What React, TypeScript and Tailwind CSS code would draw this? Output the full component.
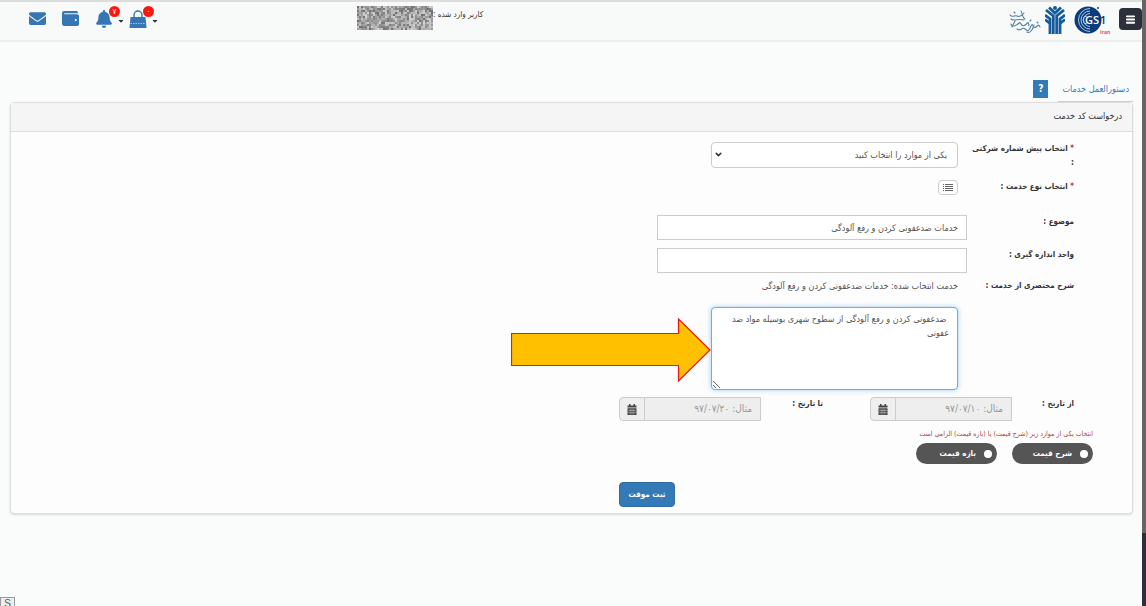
import type { ReactNode } from "react";
import { FaBell, FaCaretDown, FaEnvelope, FaWallet } from "react-icons/fa";
import { ChevronDown, Menu } from "lucide-react";

const Gs1Logo = () => (
    <svg viewBox="0 0 38 30" className="h-[30px] w-[38px]" direction="ltr" role="img" aria-label="GS1 Iran">
        <circle cx="15" cy="14" r="13.500" fill="#0b3c7c" />
        <g fill="none" stroke="#b9d3ee" strokeWidth="0.9">
            <path d="M17 2.500 A11.500 11.500 0 0 0 17 25.500" />
            <path d="M17 5 A9 9 0 0 0 17 23" />
            <path d="M17 7.500 A6.500 6.500 0 0 0 17 20.500" />
            <path d="M14 10 A4 4 0 0 0 14 18" />
        </g>
        <text x="12" y="18" fontSize="11" fontFamily="Open Sans, sans-serif" fontWeight="600" fill="#fff">GS</text>
        <text x="27" y="18" fontSize="11" fontFamily="Open Sans, sans-serif" fontWeight="600" fill="#24364f">1</text>
        <circle cx="25" cy="2" r="1" fill="#24364f" />
        <text x="27" y="28" fontSize="5" fontFamily="Open Sans, sans-serif" fontWeight="700" fill="#e0555d">Iran</text>
    </svg>
);

const TreeLogo = () => (
    <svg viewBox="0 0 20 28" className="h-7 w-5" aria-hidden="true">
        <g fill="none" stroke="#155a9c" strokeWidth="2.800">
            <path d="M1 4 L8.300 10 V28" />
            <path d="M19 4 L11.700 10 V28" />
            <path d="M0 9 L5 13 V28" />
            <path d="M20 9 L15 13 V28" />
            <path d="M4 1.500 L10 7 L16 1.500" />
            <path d="M0 13.500 L5 17.500 M20 13.500 L15 17.500" />
        </g>
        <circle cx="10" cy="2" r="2" fill="#155a9c" />
    </svg>
);

const CalligraphyLogo = () => (
    <svg viewBox="0 0 32 24" className="h-6 w-8" aria-hidden="true">
        <g fill="none" stroke="#5580a3" strokeWidth="1.100" strokeLinecap="round">
            <path d="M1 5 C3 8 6 5 8 6 S12 7 15 3" />
            <path d="M2 9 C6 12 9 8 15 10 M12 1 C14 4 13 8 16 9" />
            <path d="M2 14 C3 18 8 15 10 13 S12 18 16 15 S19 11 20 16" />
            <path d="M8 19 C12 22 13 16 16 19 S20 21 22 16 S24 20 27 17 S30 15 31 17" />
            <path d="M18 22 C21 24 24 19 25 15 M6 11 L3 17" />
            <path d="M28 12 L29 13 M21 11 L22 10 M5 2 L6 3" />
        </g>
    </svg>
);

const BagIcon = () => (
    <svg viewBox="0 0 18 19" className="h-[19px] w-[18px]" aria-hidden="true">
        <path d="M5 9 V5 a4 4 0 0 1 8 0 V9" fill="none" stroke="#3776b5" strokeWidth="1.400" />
        <path d="M1.500 7 H16.500 L17.500 18 H0.500 Z" fill="#3776b5" />
        <path d="M1.500 13.500 H16.500" stroke="#a9c5e0" strokeDasharray="1.500 1" />
    </svg>
);

const ListIcon = () => (
    <svg viewBox="0 0 10 8" className="h-2 w-2.5" aria-hidden="true">
        <path d="M0 0.500 H1 M2 0.500 H10 M0 2.500 H1 M2 2.500 H10 M0 4.500 H1 M2 4.500 H10 M0 6.500 H1 M2 6.500 H10" stroke="#666" />
    </svg>
);

const CalendarIcon = () => (
    <svg viewBox="0 0 10 11" className="h-[11px] w-2.5" aria-hidden="true">
        <path d="M0.500 1.500 H2 V0 H3.500 V1.500 H6.500 V0 H8 V1.500 H9.500 V3.500 H0.500 Z M0.500 4.300 H9.500 V11 H0.500 Z" fill="#444" />
        <path d="M1 6.500 H9 M1 8.700 H9 M3.200 5 V10.500 M5 5 V10.500 M6.800 5 V10.500" stroke="#ccc" strokeWidth="0.5" />
    </svg>
);

// blurred-out user name
const NOISE = Array.from({ length: 38 * 12 }, (_, i) => {
    const n = Math.sin(i * 12.9898) * 43758.5453;
    return 110 + Math.floor((n - Math.floor(n)) * 100);
});

const MaskedName = () => (
    <svg viewBox="0 0 76 24" className="h-6 w-[76px]" aria-hidden="true">
        {NOISE.map((v, i) => (
            <rect key={i} x={(i % 38) * 2} y={Math.floor(i / 38) * 2} width="2" height="2" fill={`rgb(${v},${v},${v})`} />
        ))}
    </svg>
);

const Badge = ({ children }: { children: ReactNode }) => (
    <span className="absolute -top-1 left-3.5 flex h-[11px] w-[11px] items-center justify-center rounded-full bg-[#f5190f] text-[8px] text-white">
        {children}
    </span>
);

const Row = ({ label, id, required, className = "", children }: {
    label: string;
    id: string;
    required?: boolean;
    className?: string;
    children: ReactNode;
}) => (
    <div className={`flex items-start ${className}`}>
        <label htmlFor={id} className="w-[107px] shrink-0 pl-1 text-[8px] font-bold">
            {required && <span className="text-[#a94442]">* </span>}
            {label}
        </label>
        {children}
    </div>
);

const DateField = ({ id, label, placeholder }: { id: string; label: string; placeholder: string }) => (
    <div className="flex items-start">
        <label htmlFor={id} className="w-[62px] text-[8px] font-bold">{label}</label>
        <div className="flex h-6 w-[142px] overflow-hidden rounded-l border border-[#ccc] bg-[#eee]">
            <input id={id} disabled placeholder={placeholder} className="min-w-0 flex-1 px-2 text-[10px] placeholder:text-[#999]" />
            <button type="button" aria-label={label} className="flex w-[25px] items-center justify-center border-r border-[#ccc]">
                <CalendarIcon />
            </button>
        </div>
    </div>
);

const PriceOption = ({ label }: { label: string }) => (
    <label className="flex h-[21px] w-[81px] items-center gap-2 rounded-full bg-[#555] px-[5px] text-[8px] font-bold text-white">
        <input type="radio" name="price" className="h-2 w-2 appearance-none rounded-full bg-white" />
        {label}
    </label>
);

export default function App() {
    return (
        <div dir="rtl" className="flex min-h-screen bg-[#fafcfb] font-['DejaVu_Sans_Condensed','DejaVu_Sans',sans-serif] text-[9px] leading-[14px] text-[#333]">
            <div className="w-1 shrink-0 bg-[#2b303b]">
                <div className="h-[88vh] bg-[#666]" />
            </div>

            <div className="min-w-0 flex-1">
                <header className="flex h-[42px] items-start border-y-2 border-b-[#eceeee] border-t-[#ddd] bg-[#f8f9f9] pt-1">
                    <button type="button" aria-label="منو" className="mt-0.5 flex h-[22px] w-[23px] items-center justify-center rounded bg-[#2b303b] text-white">
                        <Menu size={11} strokeWidth={4} />
                    </button>
                    <div className="mr-2 flex items-start gap-2">
                        <Gs1Logo />
                        <TreeLogo />
                        <div className="-mr-1 pt-1"><CalligraphyLogo /></div>
                    </div>
                    <div className="flex flex-1 justify-end pl-[200px]">
                        <span className="pt-0.5 text-[8px]">کاربر وارد شده :</span>
                        <MaskedName />
                    </div>
                    <nav className="flex w-[157px] items-start justify-end gap-4 pl-[29px] pt-1 text-[#3776b5]">
                        <a href="#cart" aria-label="سبد خرید" className="relative w-[18px]">
                            <BagIcon />
                            <Badge>۰</Badge>
                            <FaCaretDown size={8} className="absolute left-[22px] top-[7px] text-[#333]" />
                        </a>
                        <a href="#alerts" aria-label="اعلان‌ها" className="relative w-[18px]">
                            <FaBell size={18} />
                            <Badge>۷</Badge>
                            <FaCaretDown size={8} className="absolute left-[22px] top-[7px] text-[#333]" />
                        </a>
                        <a href="#wallet" aria-label="کیف پول"><FaWallet size={17} /></a>
                        <a href="#inbox" aria-label="پیام‌ها"><FaEnvelope size={17} /></a>
                    </nav>
                </header>

                <main className="px-[9px] pl-2.5 pt-9">
                    <div className="flex h-6 items-start">
                        <a href="#guide" className="h-6 border-b border-[#ccc] px-1 pt-1 text-[9px] text-[#337ab7]">دستورالعمل خدمات</a>
                        <button type="button" className="mr-2.5 mt-0.5 h-[18px] w-[15px] bg-[#337ab7] text-[10px] font-bold text-white">?</button>
                    </div>

                    <section className="rounded border border-[#ddd] bg-[#fdfdfd] shadow-sm">
                        <h2 className="h-[29px] border-b border-[#ddd] bg-[#f5f5f5] px-2.5 pt-1.5">درخواست کد خدمت</h2>

                        <form className="px-[58px] pb-1.5 pt-2.5">
                            <Row id="prefix" label="انتخاب پیش شماره شرکتی :" required className="mb-3 h-[26px]">
                                <div className="relative mr-[9px] w-[247px]">
                                    <select id="prefix" className="h-[26px] w-full appearance-none rounded border border-[#ccc] bg-white px-2.5 text-[#555]">
                                        <option>یکی از موارد را انتخاب کنید</option>
                                    </select>
                                    <ChevronDown size={9} strokeWidth={4} className="pointer-events-none absolute left-[3px] top-2" />
                                </div>
                            </Row>
                            <Row id="kind" label="انتخاب نوع خدمت :" required className="mb-5 h-[15px]">
                                <button id="kind" type="button" className="mr-[9px] flex h-[15px] w-5 items-center justify-center rounded-sm border border-[#ccc] bg-white">
                                    <ListIcon />
                                </button>
                            </Row>
                            <Row id="subject" label="موضوع :" className="mb-2">
                                <input id="subject" defaultValue="خدمات ضدعفونی کردن و رفع آلودگی" className="h-[25px] w-[310px] border border-[#ccc] bg-white px-2 text-[#555]" />
                            </Row>
                            <Row id="unit" label="واحد اندازه گیری :" className="mb-1.5">
                                <input id="unit" className="h-[25px] w-[310px] border border-[#ccc] bg-white px-2 text-[#555]" />
                            </Row>
                            <Row id="summary" label="شرح مختصری از خدمت :" className="mb-3.5">
                                <p className="mr-[9px] text-[#555]">خدمت انتخاب شده: خدمات ضدعفونی کردن و رفع آلودگی</p>
                            </Row>
                            <div className="relative mb-[7px] mr-[116px] h-[83px] w-[247px]">
                                <textarea
                                    id="summary"
                                    defaultValue=" ضدعفونی کردن و رفع آلودگی از سطوح شهری بوسیله مواد ضد عفونی"
                                    className="block h-full w-full rounded border border-[#66afe9] bg-white px-2 py-1 text-[#555] shadow-[0_0_5px_rgba(102,175,233,0.6)]"
                                />
                                <svg viewBox="0 0 200 64" className="absolute right-full top-[11px] h-16 w-[200px]" aria-hidden="true">
                                    <path d="M0.500 15.500 H167.500 V1 L199 32 L167.500 63 V47.500 H0.500 Z" fill="#ffc000" stroke="#f01414" strokeWidth="1.200" />
                                </svg>
                            </div>
                            <div className="flex gap-[47px]">
                                <DateField id="from" label="از تاریخ :" placeholder="مثال: ۹۷/۰۷/۱۰" />
                                <DateField id="to" label="تا تاریخ :" placeholder="مثال: ۹۷/۰۷/۲۰" />
                            </div>
                            <fieldset className="-mr-[19px] mt-1.5">
                                <legend className="text-[7px] text-[#a94442]">انتخاب یکی از موارد زیر (شرح قیمت) یا (بازه قیمت) الزامی است</legend>
                                <div className="mt-0.5 flex gap-[15px]">
                                    <PriceOption label="شرح قیمت" />
                                    <PriceOption label="بازه قیمت" />
                                </div>
                            </fieldset>
                            <button type="button" className="mr-[399px] mt-[18px] block h-[25px] w-14 rounded-sm border border-[#2e6da4] bg-[#337ab7] text-[8px] font-bold text-white">ثبت موقت</button>
                        </form>
                    </section>
                </main>
            </div>

            <button type="button" className="fixed -bottom-1 left-0 h-[13px] w-[15px] border border-[#999] bg-[#eee] font-['Liberation_Sans',sans-serif] text-[10px] leading-[11px] text-[#555]">S</button>
        </div>
    );
}
